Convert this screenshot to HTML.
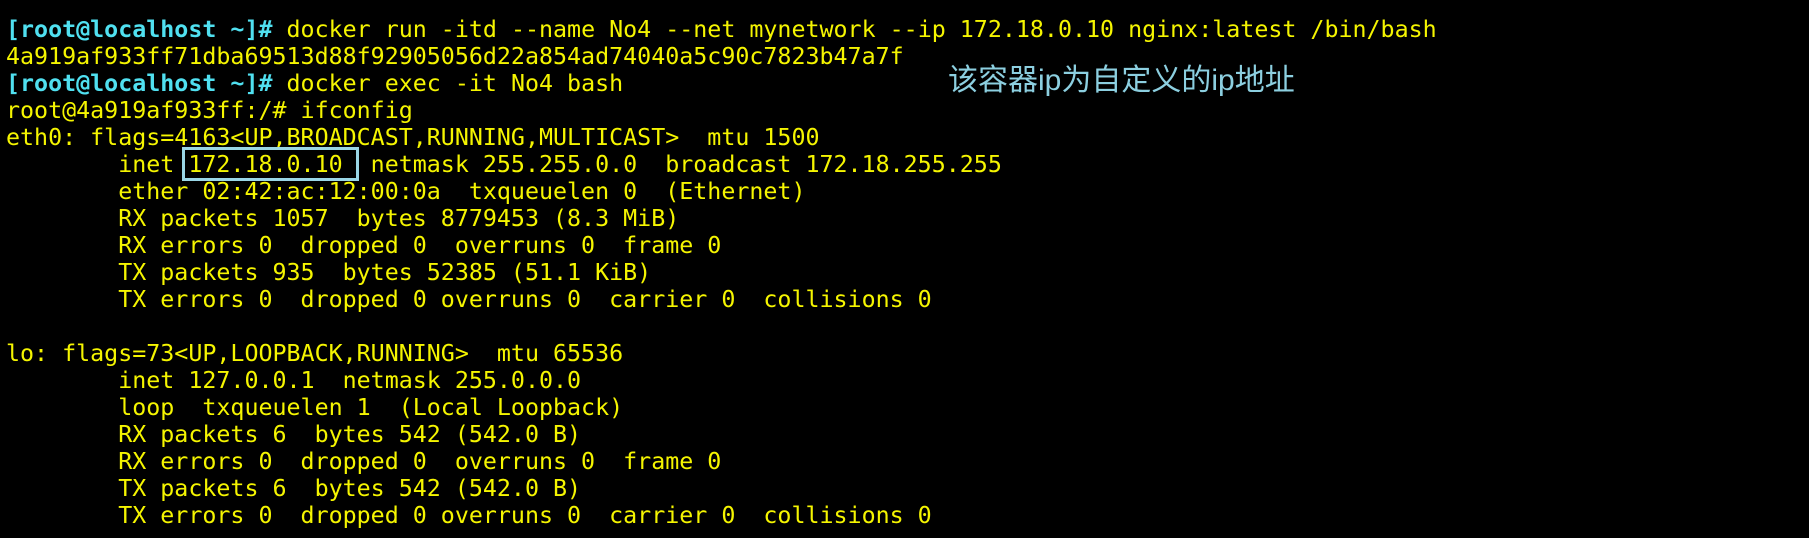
<!DOCTYPE html>
<html><head><meta charset="utf-8"><style>
html,body{margin:0;padding:0;background:#000;width:1809px;height:538px;overflow:hidden;}
pre{position:absolute;left:6px;top:16px;margin:0;font-family:"DejaVu Sans Mono","Liberation Mono",monospace;font-size:23.3px;line-height:27px;color:#f5f500;}
.p{color:#50e0f0;font-weight:bold;}
.note{position:absolute;left:948px;top:55px;font-family:"Liberation Sans","Noto Sans CJK SC",sans-serif;font-size:30px;color:#8ccfe0;white-space:nowrap;}
.box{position:absolute;left:182px;top:147px;width:171px;height:28px;border:3px solid #9ad6e6;}
</style></head><body>
<pre><span class="p">[root@localhost ~]#</span> docker run -itd --name No4 --net mynetwork --ip 172.18.0.10 nginx:latest /bin/bash
4a919af933ff71dba69513d88f92905056d22a854ad74040a5c90c7823b47a7f
<span class="p">[root@localhost ~]#</span> docker exec -it No4 bash
root@4a919af933ff:/# ifconfig
eth0: flags=4163&lt;UP,BROADCAST,RUNNING,MULTICAST&gt;  mtu 1500
        inet 172.18.0.10  netmask 255.255.0.0  broadcast 172.18.255.255
        ether 02:42:ac:12:00:0a  txqueuelen 0  (Ethernet)
        RX packets 1057  bytes 8779453 (8.3 MiB)
        RX errors 0  dropped 0  overruns 0  frame 0
        TX packets 935  bytes 52385 (51.1 KiB)
        TX errors 0  dropped 0 overruns 0  carrier 0  collisions 0

lo: flags=73&lt;UP,LOOPBACK,RUNNING&gt;  mtu 65536
        inet 127.0.0.1  netmask 255.0.0.0
        loop  txqueuelen 1  (Local Loopback)
        RX packets 6  bytes 542 (542.0 B)
        RX errors 0  dropped 0  overruns 0  frame 0
        TX packets 6  bytes 542 (542.0 B)
        TX errors 0  dropped 0 overruns 0  carrier 0  collisions 0
</pre>
<div class="box"></div>
<div class="note">该容器ip为自定义的ip地址</div>
</body></html>
